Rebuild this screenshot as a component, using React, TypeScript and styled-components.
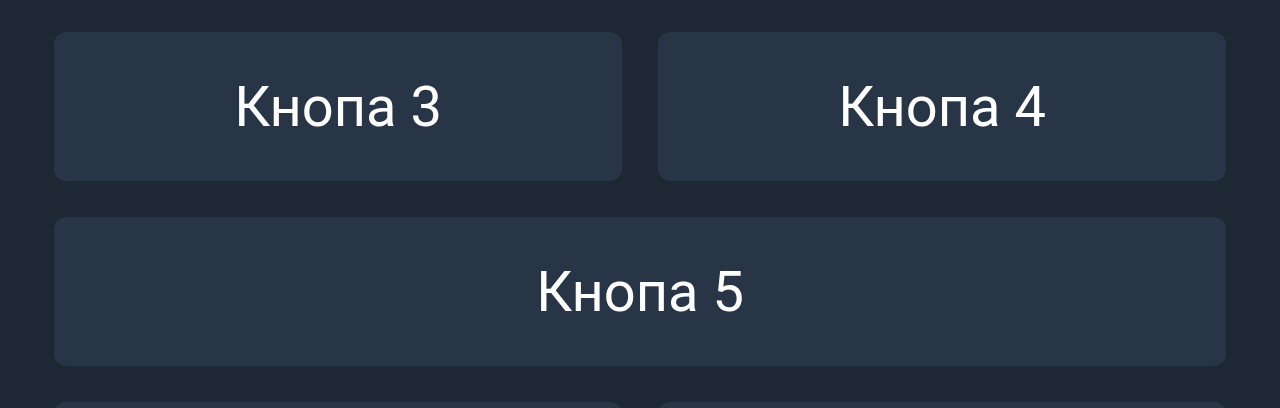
import React from "react";
import styled, { createGlobalStyle } from "styled-components";

const GlobalStyle = createGlobalStyle`
  html, body {
    margin: 0;
    padding: 0;
    background: #1e2734;
    font-family: Roboto, "Noto Sans", sans-serif;
    height: 408px;
    overflow: hidden;
  }
`;

const Page = styled.div`
  padding: 32px 54px 0;
  display: grid;
  grid-template-columns: 1fr 1fr;
  gap: 36px;
`;

const Button = styled.button<{ $wide?: boolean }>`
  grid-column: ${(p) => (p.$wide ? "1 / span 2" : "auto")};
  height: 149px;
  border: none;
  border-radius: 12px;
  background: #283546;
  color: #ffffff;
  font-family: Roboto, "Noto Sans", sans-serif;
  font-size: 56px;
  display: flex;
  align-items: center;
  justify-content: center;
  padding: 0;
  cursor: pointer;
`;

// the last row is only partly in view, its labels fall below the frame
const buttons = [
  { id: 3, label: "Кнопа 3" },
  { id: 4, label: "Кнопа 4" },
  { id: 5, label: "Кнопа 5", wide: true },
  { id: 6, label: "" },
  { id: 7, label: "" },
];

export default function App() {
  return (
    <>
      <GlobalStyle />
      <Page>
        {buttons.map((b) => (
          <Button key={b.id} $wide={b.wide}>
            {b.label}
          </Button>
        ))}
      </Page>
    </>
  );
}
